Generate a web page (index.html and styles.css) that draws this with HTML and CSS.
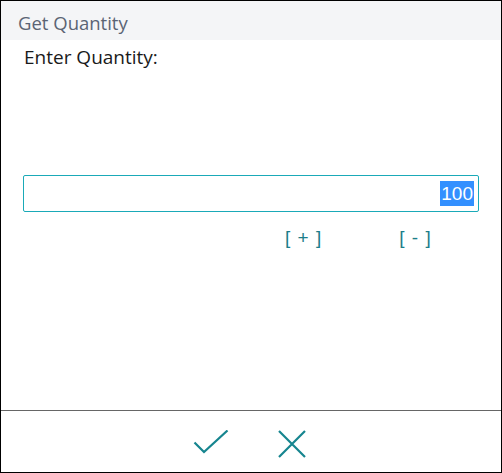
FILE: index.html
```html
<!DOCTYPE html>
<html>
<head>
<meta charset="utf-8">
<link rel="stylesheet" href="styles.css">
</head>
<body>
<div class="window">
  <div class="titlebar">Get Quantity</div>
  <div class="content">
    <div class="prompt">Enter Quantity:</div>
    <div class="field"><span class="value">100</span></div>
    <div class="steppers">
      <span class="step plus">[ + ]</span>
      <span class="step minus">[ - ]</span>
    </div>
  </div>
  <div class="footer">
    <svg class="icon" width="36" height="28" viewBox="0 0 36 28">
      <path d="M1.5 12.5 L11 22 L34.5 0.5" fill="none" stroke="#16858f" stroke-width="2.2"/>
    </svg>
    <svg class="icon" width="28" height="28" viewBox="0 0 28 28">
      <path d="M1 1 L27 27 M27 1 L1 27" fill="none" stroke="#16858f" stroke-width="2.2"/>
    </svg>
  </div>
</div>
</body>
</html>
```
FILE: styles.css
```css
html, body {
  margin: 0;
  padding: 0;
  background: #fff;
}
.window {
  width: 502px;
  height: 473px;
  box-sizing: border-box;
  border: 1px solid #000;
  display: flex;
  flex-direction: column;
  font-family: "Open Sans", "Noto Sans", sans-serif;
}
.titlebar {
  height: 39px;
  background: #f4f5f7;
  color: #5b6474;
  font-size: 18.5px;
  line-height: 43px;
  padding-left: 17px;
}
.content {
  flex: 1;
  padding: 0 22px 0 22px;
}
.prompt {
  font-size: 19px;
  color: #1a1a1a;
  line-height: 30px;
  margin-top: 2px;
  padding-left: 1px;
}
.field {
  margin-top: 103px;
  height: 37px;
  box-sizing: border-box;
  border: 1px solid #1aaab8;
  border-radius: 2px;
  display: flex;
  justify-content: flex-end;
  align-items: center;
  padding-right: 4px;
}
.value {
  font-family: "Liberation Sans", Arial, sans-serif;
  font-size: 19px;
  background: #3390ff;
  color: #fff;
  line-height: 25px;
  padding: 0 1px;
}
.steppers {
  display: flex;
  margin-top: 14px;
  padding-left: 262px;
  gap: 78px;
}
.step {
  font-family: "Liberation Sans", Arial, sans-serif;
  color: #1c7d8a;
  font-size: 19px;
  line-height: 24px;
  word-spacing: 2px;
}
.footer {
  height: 62px;
  border-top: 1px solid #666;
  display: flex;
  justify-content: center;
  align-items: flex-start;
  box-sizing: border-box;
  padding-top: 19px;
  gap: 49px;
  padding-right: 4px;
}
.icon {
  display: block;
}
```
